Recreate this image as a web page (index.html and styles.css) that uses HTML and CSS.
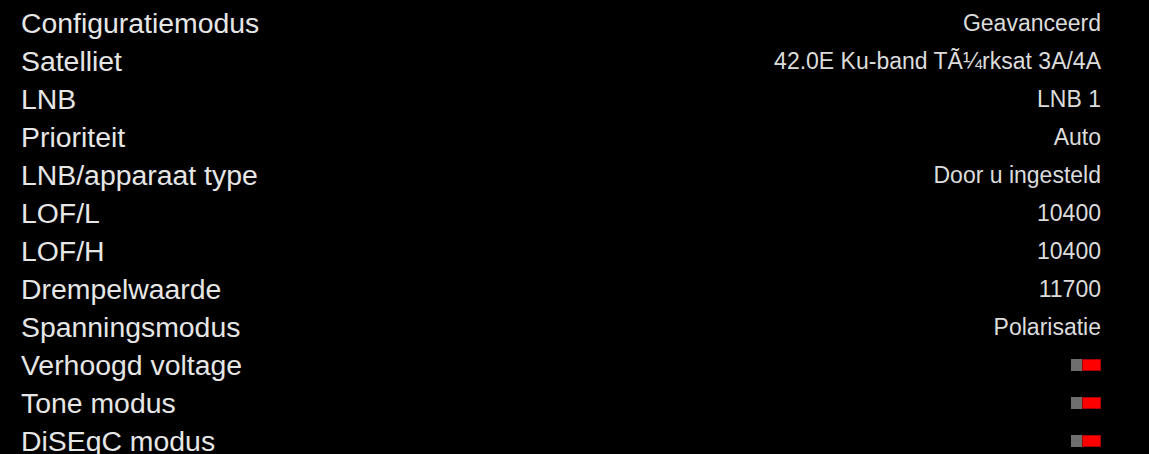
FILE: index.html
```html
<!DOCTYPE html>
<html lang="nl">
<head>
  <meta charset="UTF-8" />
  <title>LNB instellingen</title>
  <link rel="stylesheet" href="styles.css">
</head>
<body>

<div class="setup-list">
  <div class="row"><span class="label">Configuratiemodus</span><span class="value">Geavanceerd</span></div>
  <div class="row"><span class="label">Satelliet</span><span class="value">42.0E Ku-band TÃ¼rksat 3A/4A</span></div>
  <div class="row"><span class="label">LNB</span><span class="value">LNB 1</span></div>
  <div class="row"><span class="label">Prioriteit</span><span class="value">Auto</span></div>
  <div class="row"><span class="label">LNB/apparaat type</span><span class="value">Door u ingesteld</span></div>
  <div class="row"><span class="label">LOF/L</span><span class="value">10400</span></div>
  <div class="row"><span class="label">LOF/H</span><span class="value">10400</span></div>
  <div class="row"><span class="label">Drempelwaarde</span><span class="value">11700</span></div>
  <div class="row"><span class="label">Spanningsmodus</span><span class="value">Polarisatie</span></div>
  <div class="row"><span class="label">Verhoogd voltage</span><span class="toggle"></span></div>
  <div class="row"><span class="label">Tone modus</span><span class="toggle"></span></div>
  <div class="row"><span class="label">DiSEqC modus</span><span class="toggle"></span></div>
</div>

</body>
</html>
```

FILE: styles.css
```css
body {
  background-color: #000;
  margin: 0;
  font-family: "Liberation Sans", Arial, sans-serif;
  overflow: hidden;
}
.setup-list {
  padding: 4px 48px 0 21px;
}
.row {
  display: flex;
  justify-content: space-between;
  align-items: center;
  height: 38px;
}
.label {
  color: #e6e6e6;
  font-size: 28.4px;
}
.value {
  color: #dcdcdc;
  font-size: 23px;
}
.toggle {
  display: flex;
  width: 30px;
  height: 12px;
  margin-top: -1px;
}
.toggle::before {
  content: "";
  width: 11px;
  background: #6e6e6e;
}
.toggle::after {
  content: "";
  flex: 1;
  background: #f00;
  border: 1px solid #a00;
}
```
